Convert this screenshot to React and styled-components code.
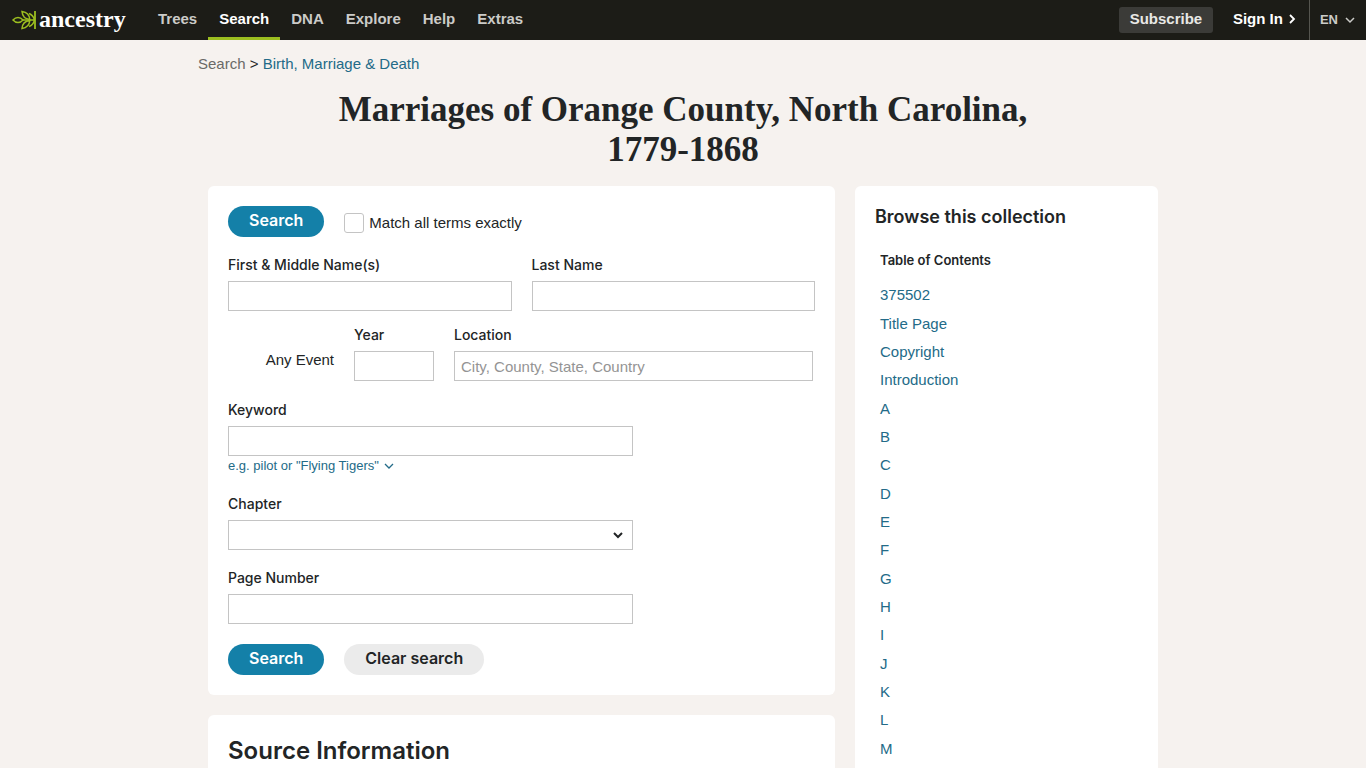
import React from "react";
import styled, { createGlobalStyle, css } from "styled-components";

const sans = `"Liberation Sans", Arial, sans-serif`;
const medium = `Inter, "Liberation Sans", sans-serif`;
const serif = `"Liberation Serif", "Times New Roman", serif`;
const ink = "#222526";
const link = "#236b88";

const GlobalStyle = createGlobalStyle`
  *, *::before, *::after { box-sizing: border-box; }
  body { margin: 0; background: #f6f2ef; color: ${ink}; font: 15px/20px ${sans}; }
  a { text-decoration: none; }
  button, input, select { font: inherit; color: inherit; }
`;

/* Top bar */
const TopBar = styled.header`
  display: flex;
  align-items: stretch;
  height: 40px;
  padding-left: 12px;
  background: #1c1c17;
  font-weight: 700;
`;
const Logo = styled.a`
  display: flex;
  align-items: center;
  gap: 3px;
  width: 135px;
  color: #fff;
`;
const LogoName = styled.span`
  font: 700 24px/30px ${serif};
  padding-bottom: 3px;
`;
const Menu = styled.nav`
  display: flex;
  flex: 1;
`;
const MenuLink = styled.a`
  padding: 9px 11px 8px;
  color: ${(p) => (p.$active ? "#fff" : "#cbcbc8")};
  border-bottom: 3px solid ${(p) => (p.$active ? "#9cbe20" : "transparent")};
`;
const Account = styled.div`
  display: flex;
  align-items: center;
`;
const Subscribe = styled.button`
  width: 94px;
  height: 26px;
  padding: 0 0 2px;
  border: 0;
  border-radius: 3px;
  background: #3b3b38;
  color: #e8e8e6;
`;
const SignIn = styled.a`
  display: flex;
  align-items: center;
  gap: 5px;
  padding: 0 13px 2px 20px;
  color: #fff;
`;
const Language = styled.button`
  display: flex;
  align-items: center;
  gap: 7px;
  height: 40px;
  padding: 0 11px 0 10px;
  border: 0;
  border-left: 1px solid #55554f;
  background: none;
  color: #cbcbc8;
  font-size: 13px;
  font-weight: 700;
`;

/* Page */
const Page = styled.div`
  max-width: 970px;
  margin: 0 auto;
`;
const Breadcrumb = styled.nav`
  padding: 14px 0 16px;
`;
const Crumb = styled.a`
  color: ${(p) => (p.$muted ? "#6a6a67" : link)};
`;
const Title = styled.h1`
  max-width: 750px;
  margin: 0 auto 16px;
  text-align: center;
  font: 700 35px/40px ${serif};
`;
const Columns = styled.div`
  display: grid;
  grid-template-columns: minmax(0, 627fr) minmax(0, 303fr);
  gap: 20px;
  padding: 0 10px;
`;
const MainColumn = styled.main`
  display: flex;
  flex-direction: column;
  gap: 20px;
`;
const Card = styled.section`
  padding: 20px;
  border-radius: 6px;
  background: #fff;
`;

/* Form */
const Form = styled.form`
  display: flex;
  flex-direction: column;
  gap: 18px;
`;
const Actions = styled.div`
  display: flex;
  align-items: center;
  gap: 20px;
`;
const PillButton = styled.button`
  height: 31px;
  padding: 0 21px 3px;
  border: 0;
  border-radius: 16px;
  background: ${(p) => (p.$secondary ? "#ebebeb" : "#1480a8")};
  color: ${(p) => (p.$secondary ? ink : "#fff")};
  font: 600 16px/20px ${medium};
`;
const CheckLabel = styled.label`
  display: flex;
  align-items: center;
  gap: 5px;
  padding-top: 3px;
`;
const CheckBox = styled.input`
  appearance: none;
  width: 20px;
  height: 20px;
  margin: 0;
  border: 1px solid #c4c4c4;
  border-radius: 3px;
  background: #fff;
`;
const NameRow = styled.div`
  display: grid;
  grid-template-columns: 1fr 1fr;
  gap: 20px;
`;
const EventRow = styled.div`
  display: grid;
  grid-template-columns: 106px 80px minmax(0, 359px);
  gap: 20px;
  margin: -4px 0 1px;
`;
const EventName = styled.span`
  align-self: end;
  padding-bottom: 11px;
  text-align: right;
`;
const Field = styled.div`
  display: flex;
  flex-direction: column;
  gap: 6px;
  max-width: ${(p) => (p.$wide ? "none" : "405px")};
`;
const Label = styled.label`
  font: 500 14px/20px ${medium};
`;
const control = css`
  width: 100%;
  height: 30px;
  padding: 0 6px;
  border: 1px solid #c4c4c4;
  border-radius: 0;
  background: #fff;
`;
const TextBox = styled.input`
  ${control}
  &::placeholder { color: #949494; opacity: 1; }
`;
const SelectWrap = styled.div`
  display: grid;
  align-items: center;
  > * { grid-area: 1 / 1; }
  > svg { justify-self: end; margin-right: 10px; pointer-events: none; }
`;
const Select = styled.select`
  ${control}
  appearance: none;
`;
const HintButton = styled.button`
  display: flex;
  align-items: center;
  gap: 5px;
  height: 20px;
  margin-top: -6px;
  padding: 0;
  border: 0;
  background: none;
  color: ${link};
  font-size: 13px;
`;
const SubmitRow = styled(Actions)`
  padding-top: 2px;
`;
const SourceTitle = styled.h2`
  margin: 0;
  font: 600 24px/32px ${medium};
`;

/* Browse panel */
const BrowseTitle = styled.h2`
  margin: 0;
  font: 600 18px/22px ${medium};
`;
const ContentsTitle = styled.h3`
  margin: 22px 5px 11px;
  font: 600 13px/20px ${medium};
`;
const Contents = styled.ul`
  margin: 0;
  padding: 0 5px;
  list-style: none;
`;
const ContentsItem = styled.li`
  line-height: 28px;
  &:nth-child(3n + 1) { padding-bottom: 1px; }
`;
const ContentsLink = styled.a`
  color: ${link};
`;

const Leaf = () => (
  <svg width="24" height="20" viewBox="0 0 24 20" fill="none" stroke="#9cbe20" strokeWidth="1.5" aria-hidden="true">
    <path d="M23 1v18" strokeWidth="1.8" />
    <path d="M1 10c3-3.400 7-3.400 10 0-3 3.400-7 3.400-10 0Z" />
    <path d="M10 1.500c5 .8 7.500 3.500 7.800 8C13.200 9 10.400 6.500 10 1.500ZM10 18.500c5-.8 7.500-3.500 7.800-8-4.600.5-7.400 3-7.800 8Z" />
    <path d="M11 10h12M17 3.500c2.600 1 4.600 3.200 5.500 6.300M17 16.500c2.600-1 4.600-3.200 5.500-6.300" />
  </svg>
);

const Chevron = ({ stroke = 1.5 }) => (
  <svg width="10" height="10" viewBox="0 0 10 10" fill="none" stroke="currentColor" strokeWidth={stroke} aria-hidden="true">
    <path d="M1 3l4 4 4-4" />
  </svg>
);

const menu = ["Trees", "Search", "DNA", "Explore", "Help", "Extras"];
const contents = ["375502", "Title Page", "Copyright", "Introduction", ..."ABCDEFGHIJKLM"];

export default function App() {
  return (
    <>
      <GlobalStyle />
      <TopBar>
        <Logo href="#">
          <Leaf />
          <LogoName>ancestry</LogoName>
        </Logo>
        <Menu>
          {menu.map((m) => (
            <MenuLink key={m} href="#" $active={m === "Search"}>{m}</MenuLink>
          ))}
        </Menu>
        <Account>
          <Subscribe type="button">Subscribe</Subscribe>
          <SignIn href="#">
            Sign In
            <svg width="8" height="10" viewBox="0 0 8 10" fill="none" stroke="currentColor" strokeWidth="1.8" aria-hidden="true">
              <path d="M2 1l4 4-4 4" />
            </svg>
          </SignIn>
          <Language type="button">EN <Chevron /></Language>
        </Account>
      </TopBar>

      <Page>
        <Breadcrumb>
          <Crumb href="#" $muted>Search</Crumb> &gt; <Crumb href="#">Birth, Marriage &amp; Death</Crumb>
        </Breadcrumb>
        <Title>Marriages of Orange County, North Carolina, 1779-1868</Title>
        <Columns>
          <MainColumn>
            <Card>
              <Form>
                <Actions>
                  <PillButton type="submit">Search</PillButton>
                  <CheckLabel>
                    <CheckBox type="checkbox" />
                    Match all terms exactly
                  </CheckLabel>
                </Actions>
                <NameRow>
                  <Field $wide>
                    <Label htmlFor="first">First &amp; Middle Name(s)</Label>
                    <TextBox id="first" type="text" />
                  </Field>
                  <Field $wide>
                    <Label htmlFor="last">Last Name</Label>
                    <TextBox id="last" type="text" />
                  </Field>
                </NameRow>
                <EventRow>
                  <EventName>Any Event</EventName>
                  <Field>
                    <Label htmlFor="year">Year</Label>
                    <TextBox id="year" type="text" />
                  </Field>
                  <Field>
                    <Label htmlFor="location">Location</Label>
                    <TextBox id="location" type="text" placeholder="City, County, State, Country" />
                  </Field>
                </EventRow>
                <Field>
                  <Label htmlFor="keyword">Keyword</Label>
                  <TextBox id="keyword" type="text" />
                  <HintButton type="button">e.g. pilot or "Flying Tigers" <Chevron stroke={1.3} /></HintButton>
                </Field>
                <Field>
                  <Label htmlFor="chapter">Chapter</Label>
                  <SelectWrap>
                    <Select id="chapter" />
                    <Chevron stroke={2} />
                  </SelectWrap>
                </Field>
                <Field>
                  <Label htmlFor="page">Page Number</Label>
                  <TextBox id="page" type="text" />
                </Field>
                <SubmitRow>
                  <PillButton type="submit">Search</PillButton>
                  <PillButton type="reset" $secondary>Clear search</PillButton>
                </SubmitRow>
              </Form>
            </Card>
            <Card>
              <SourceTitle>Source Information</SourceTitle>
            </Card>
          </MainColumn>
          <Card as="aside">
            <BrowseTitle>Browse this collection</BrowseTitle>
            <ContentsTitle>Table of Contents</ContentsTitle>
            <Contents>
              {contents.map((c) => (
                <ContentsItem key={c}><ContentsLink href="#">{c}</ContentsLink></ContentsItem>
              ))}
            </Contents>
          </Card>
        </Columns>
      </Page>
    </>
  );
}
